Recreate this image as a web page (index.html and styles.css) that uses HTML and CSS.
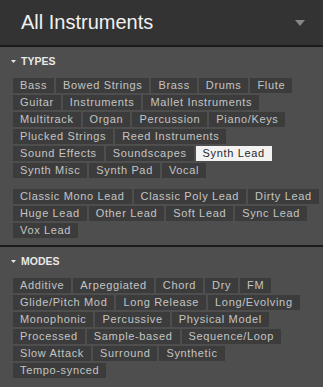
FILE: index.html
```html
<!DOCTYPE html>
<html lang="en">
<head>
  <meta charset="UTF-8">
  <meta name="viewport" content="width=device-width, initial-scale=1.0">
  <title>All Instruments</title>
  <link rel="stylesheet" href="styles.css">
</head>
<body>
  <div class="browser">
    <div class="header">
      <span class="header-title">All Instruments</span>
      <svg class="header-arrow" width="10" height="6" viewBox="0 0 10 6"><polygon points="0,0 10,0 5,6" fill="#868686"/></svg>
    </div>

    <div class="section">
      <div class="section-title">
        <svg class="section-arrow" width="5" height="3" viewBox="0 0 5 3"><polygon points="0,0 5,0 2.5,3" fill="#e6e6e6"/></svg>
        TYPES
      </div>
      <div class="tag-group">
        <div class="tag-row"><span class="tag">Bass</span><span class="tag">Bowed Strings</span><span class="tag">Brass</span><span class="tag">Drums</span><span class="tag">Flute</span></div>
        <div class="tag-row"><span class="tag">Guitar</span><span class="tag">Instruments</span><span class="tag">Mallet Instruments</span></div>
        <div class="tag-row"><span class="tag">Multitrack</span><span class="tag">Organ</span><span class="tag">Percussion</span><span class="tag">Piano/Keys</span></div>
        <div class="tag-row"><span class="tag">Plucked Strings</span><span class="tag">Reed Instruments</span></div>
        <div class="tag-row"><span class="tag">Sound Effects</span><span class="tag">Soundscapes</span><span class="tag selected">Synth Lead</span></div>
        <div class="tag-row"><span class="tag">Synth Misc</span><span class="tag">Synth Pad</span><span class="tag">Vocal</span></div>
      </div>
      <div class="tag-group sub">
        <div class="tag-row"><span class="tag">Classic Mono Lead</span><span class="tag">Classic Poly Lead</span><span class="tag">Dirty Lead</span></div>
        <div class="tag-row"><span class="tag">Huge Lead</span><span class="tag">Other Lead</span><span class="tag">Soft Lead</span><span class="tag">Sync Lead</span></div>
        <div class="tag-row"><span class="tag">Vox Lead</span></div>
      </div>
    </div>

    <div class="section last">
      <div class="section-title">
        <svg class="section-arrow" width="5" height="3" viewBox="0 0 5 3"><polygon points="0,0 5,0 2.5,3" fill="#e6e6e6"/></svg>
        MODES
      </div>
      <div class="tag-group">
        <div class="tag-row"><span class="tag">Additive</span><span class="tag">Arpeggiated</span><span class="tag">Chord</span><span class="tag">Dry</span><span class="tag">FM</span></div>
        <div class="tag-row"><span class="tag">Glide/Pitch Mod</span><span class="tag">Long Release</span><span class="tag">Long/Evolving</span></div>
        <div class="tag-row"><span class="tag">Monophonic</span><span class="tag">Percussive</span><span class="tag">Physical Model</span></div>
        <div class="tag-row"><span class="tag">Processed</span><span class="tag">Sample-based</span><span class="tag">Sequence/Loop</span></div>
        <div class="tag-row"><span class="tag">Slow Attack</span><span class="tag">Surround</span><span class="tag">Synthetic</span></div>
        <div class="tag-row"><span class="tag">Tempo-synced</span></div>
      </div>
    </div>
  </div>
</body>
</html>
```

FILE: styles.css
```css
* {
  margin: 0;
  padding: 0;
  box-sizing: border-box;
  font-family: "Liberation Sans", Arial, sans-serif;
}

html, body {
  background: #4e4e4e;
  height: 100%;
}

.browser {
  width: 323px;
  min-height: 387px;
  background: #4e4e4e;
}

.header {
  display: flex;
  align-items: center;
  justify-content: space-between;
  height: 47px;
  padding: 0 18px 1px 21px;
  background: #333333;
  border-bottom: 2px solid #1b1b1b;
}

.header-title {
  color: #f0f0f0;
  font-size: 20px;
  line-height: 24px;
}

.header-arrow {
  display: block;
  margin-top: 1px;
}

.section {
  padding: 8px 0 7px 13px;
  border-bottom: 2px solid #1b1b1b;
}

.section.last {
  border-bottom: none;
}

.section-title {
  display: flex;
  align-items: center;
  height: 12px;
  color: #e8e8e8;
  font-size: 10.5px;
  font-weight: bold;
  line-height: 12px;
  margin-bottom: 11px;
}

.section-arrow {
  display: block;
  margin: 0 5px 0 -2px;
}

.tag-group {
  display: flex;
  flex-direction: column;
  gap: 2px;
}

.tag-group.sub {
  margin-top: 11px;
}

.tag-row {
  display: flex;
  gap: 2px;
}

.tag {
  height: 15px;
  padding: 0 7px;
  background: #3c3c3c;
  color: #c4c4c4;
  font-size: 11px;
  line-height: 15px;
  letter-spacing: 0.65px;
  white-space: nowrap;
}

.tag.selected {
  background: #f2f2f2;
  color: #2a2a2a;
}
```
